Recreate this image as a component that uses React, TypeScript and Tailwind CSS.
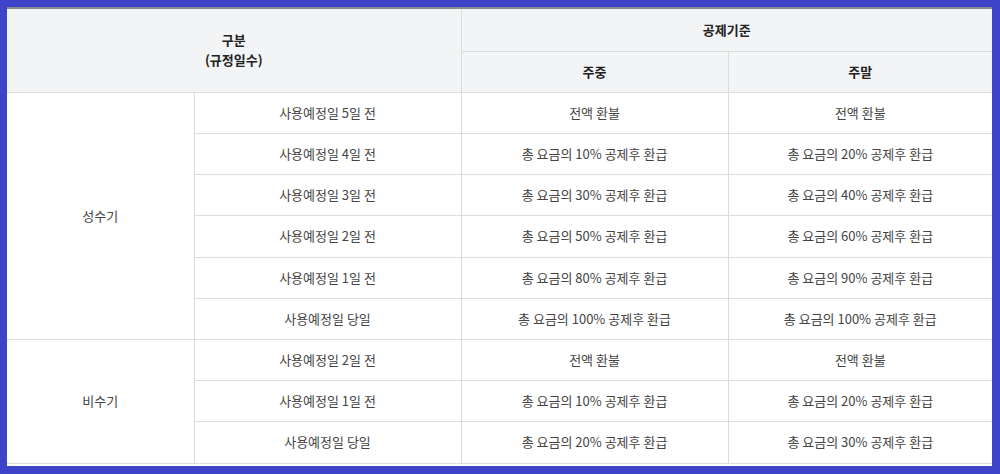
import React from 'react';

const peak = [
  ['사용예정일 5일 전', '전액 환불', '전액 환불'],
  ['사용예정일 4일 전', '총 요금의 10% 공제후 환급', '총 요금의 20% 공제후 환급'],
  ['사용예정일 3일 전', '총 요금의 30% 공제후 환급', '총 요금의 40% 공제후 환급'],
  ['사용예정일 2일 전', '총 요금의 50% 공제후 환급', '총 요금의 60% 공제후 환급'],
  ['사용예정일 1일 전', '총 요금의 80% 공제후 환급', '총 요금의 90% 공제후 환급'],
  ['사용예정일 당일', '총 요금의 100% 공제후 환급', '총 요금의 100% 공제후 환급'],
];

const offPeak = [
  ['사용예정일 2일 전', '전액 환불', '전액 환불'],
  ['사용예정일 1일 전', '총 요금의 10% 공제후 환급', '총 요금의 20% 공제후 환급'],
  ['사용예정일 당일', '총 요금의 20% 공제후 환급', '총 요금의 30% 공제후 환급'],
];

const td = 'h-[41px] border border-[#dcdcdc] text-center align-middle p-0';
const th = 'border border-[#dcdcdc] text-center align-middle font-bold text-[#222] p-0';

const App = () => {
  return (
    <div className="w-[1000px] h-[474px] bg-[#3d44c9] pt-[7px] pl-[7px] pr-[8px] pb-[8px] font-['Noto_Sans_CJK_KR',sans-serif]">
      <div className="bg-white h-full">
        <table className="w-[985px] border-collapse table-fixed text-[13px] text-[#444] border-t-2 border-t-[#8a8a8a]">
          <colgroup>
            <col className="w-[187px]" />
            <col className="w-[267px]" />
            <col className="w-[267px]" />
            <col className="w-[264px]" />
          </colgroup>
          <thead className="bg-[#f3f4f6]">
            <tr className="h-[43px]">
              <th rowSpan={2} colSpan={2} className={th + ' border-l-0 border-t-0 leading-[20px]'}>
                구분
                <br />
                (규정일수)
              </th>
              <th colSpan={2} className={th + ' border-r-0 border-t-0'}>공제기준</th>
            </tr>
            <tr className="h-[41px]">
              <th className={th}>주중</th>
              <th className={th + ' border-r-0'}>주말</th>
            </tr>
          </thead>
          <tbody>
            {peak.map((r, i) => (
              <tr key={'p' + i} className={i === 3 ? 'h-[42px]' : ''}>
                {i === 0 && (
                  <td rowSpan={peak.length} className={td + ' border-l-0'}>성수기</td>
                )}
                <td className={td}>{r[0]}</td>
                <td className={td}>{r[1]}</td>
                <td className={td + ' border-r-0'}>{r[2]}</td>
              </tr>
            ))}
            {offPeak.map((r, i) => (
              <tr key={'o' + i} className={i === 2 ? 'h-[42px]' : ''}>
                {i === 0 && (
                  <td rowSpan={offPeak.length} className={td + ' border-l-0'}>비수기</td>
                )}
                <td className={td}>{r[0]}</td>
                <td className={td}>{r[1]}</td>
                <td className={td + ' border-r-0'}>{r[2]}</td>
              </tr>
            ))}
          </tbody>
        </table>
      </div>
    </div>
  );
};

export default App;
